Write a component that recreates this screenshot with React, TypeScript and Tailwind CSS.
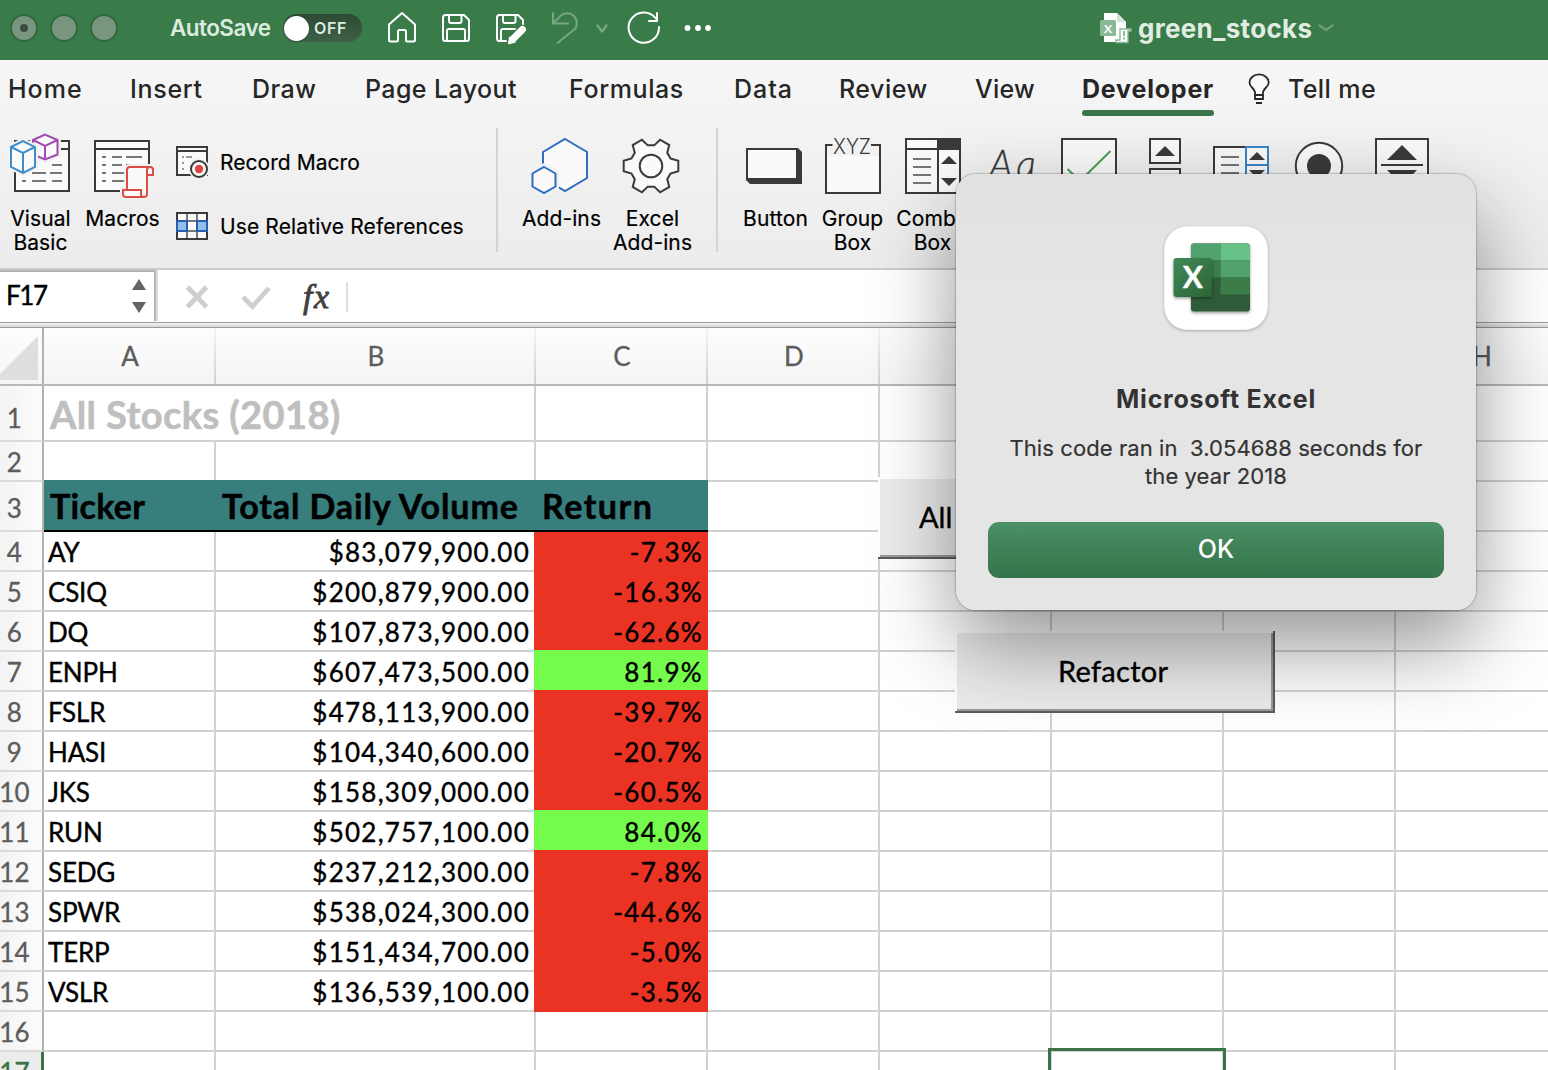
import React from "react";

const INK = "#3b3a39";
const PAPER = "#fafafa";

/* ---------- Title bar ---------- */

function TrafficLight({ dot = false }: { dot?: boolean }) {
  return (
    <span className="flex size-[28px] items-center justify-center rounded-full border-2 border-[#33693c] bg-[#789580]">
      {dot && <span className="size-2 rounded-full bg-[#3a4d3e]" />}
    </span>
  );
}

function QuickAccess() {
  return (
    <svg className="ml-[20px] h-[44px] w-[340px]" viewBox="382 6 340 44" fill="none" stroke="#fff" strokeWidth="2" strokeLinejoin="round" strokeLinecap="round">
      <path d="M402 13 L415 24.5 V40 Q415 41.5 413.500 41.500 H407.500 Q406 41.500 406 40 V31.500 Q406 30 404.500 30 H399.500 Q398 30 398 31.500 V40 Q398 41.500 396.500 41.500 H390.500 Q389 41.500 389 40 V24.500 Z" />
      <path d="M445.500 15 H464 L469 20 V38.500 Q469 41 466.500 41 H445.500 Q443 41 443 38.500 V17.500 Q443 15 445.500 15 Z M449 15 V21 Q449 23 451 23 H459.500 Q461.500 23 461.500 21 V15 M447 41 V31 Q447 29 449 29 H463 Q465 29 465 31 V41" />
      <path d="M506 41 H499.500 Q497 41 497 38.500 V17.500 Q497 15 499.500 15 H518 L523 20 V24 M503 15 V21 Q503 23 505 23 H513.500 Q515.500 23 515.500 21 V15 M501 41 V31 Q501 29 503 29 H515" />
      <path d="M513 39 L522.500 29.500" strokeWidth="7" />
      <path d="M508.500 43.500 L509.500 37 L515 42 Z" fill="#fff" strokeWidth="1" />
      <g stroke="#7ba685">
        <path d="M553 13 V23.500 H568 M553.500 23 L560.500 15.900 A9.700 9.700 0 0 1 574.500 29.300 L557.500 43" />
        <path d="M597.500 25.500 L602 31.500 L606.500 25.500" strokeWidth="2.400" />
      </g>
      <path d="M659 27 A15.200 15.200 0 1 1 656 18.500 M657 13 V21 H649" />
      <g fill="#fff" stroke="none">
        <circle cx="687.500" cy="28" r="2.900" />
        <circle cx="698" cy="28" r="2.900" />
        <circle cx="708" cy="28" r="2.900" />
      </g>
    </svg>
  );
}

function TitleBar() {
  return (
    <header className="flex h-[60px] items-start bg-[#397b49] pl-[10px]">
      <div className="flex gap-[12px] pt-[14px]">
        <TrafficLight dot />
        <TrafficLight />
        <TrafficLight />
      </div>
      <span className="ml-[52px] w-[113px] pt-[12px] text-[22.500px] leading-[32px] font-semibold tracking-[-0.55px] text-[#dcebdf]">AutoSave</span>
      <span className="mt-[14px] flex h-[28px] w-[79px] items-center rounded-full bg-linear-to-b from-[#2c4934] to-[#3f6148] pl-[1px]">
        <span className="size-[25px] rounded-full bg-white shadow" />
        <span className="ml-[5px] text-[16px] leading-none font-semibold tracking-[0.6px] text-[#dcebdf]">OFF</span>
      </span>
      <div className="mt-[6px]">
        <QuickAccess />
      </div>
      <div className="ml-[378px] flex pt-[12px]">
        <svg className="h-[32px] w-[34px]" viewBox="1100 12 34 32">
          <path d="M1104 13 H1117 L1126 22 V42 H1104 Z" fill="#fff" />
          <path d="M1117 13 V22 H1126 Z" fill="#d7e3d9" />
          <rect x="1100" y="20" width="16" height="16" rx="1.500" fill="#8bb896" />
          <text x="1108" y="32.500" textAnchor="middle" fontSize="12" fontWeight="700" fontFamily="Lato" fill="#fff">X</text>
          <path d="M1120 29 H1131 V31 H1128 V42.500 H1116 V40 H1120 Z" fill="#fff" stroke="#8bb896" strokeWidth="1.400" />
          <path d="M1124 31 V36 M1124 37.500 V39.500" stroke="#8bb896" strokeWidth="2" />
        </svg>
        <span className="ml-[4px] pt-px text-[26px] leading-[32px] font-bold tracking-[0.3px] text-[#e1ece3]">green_stocks</span>
        <svg className="mt-[10px] ml-[5px] h-[12px] w-[18px]" viewBox="0 0 18 12" fill="none" stroke="#6b9c77" strokeWidth="2.600" strokeLinecap="round" strokeLinejoin="round">
          <path d="M2.500 3.500 L9 8 L15.500 3.500" />
        </svg>
      </div>
    </header>
  );
}

/* ---------- Ribbon ---------- */

function Tabs() {
  const tab = "text-[25px] leading-[32px] font-medium text-[#262626]";
  return (
    <nav className="flex h-[60px] items-start pt-[13px] pl-[8px] whitespace-nowrap">
      <span className={`${tab} w-[122px] tracking-[1px]`}>Home</span>
      <span className={`${tab} w-[122px] tracking-[0.7px]`}>Insert</span>
      <span className={`${tab} w-[113px] tracking-[0.5px]`}>Draw</span>
      <span className={`${tab} w-[204px] tracking-[0.4px]`}>Page Layout</span>
      <span className={`${tab} w-[165px] tracking-[0.6px]`}>Formulas</span>
      <span className={`${tab} w-[105px] tracking-[1px]`}>Data</span>
      <span className={`${tab} w-[136px] tracking-[0.5px]`}>Review</span>
      <span className={`${tab} w-[107px] tracking-[0.2px]`}>View</span>
      <span className="flex w-[132px] flex-col">
        <span className="text-[25px] leading-[32px] font-bold tracking-[0.8px] text-[#262626]">Developer</span>
        <span className="mt-[5px] h-[6px] rounded-full bg-[#3b7449]" />
      </span>
      <svg className="-mt-px ml-[33px] h-[34px] w-[24px]" viewBox="1247 72 24 34" fill="none" stroke="#262626" strokeWidth="1.800">
        <path d="M1255 95 V92 Q1254.500 90 1252 87.500 Q1249.500 85 1249.500 82.500 A9.600 8.200 0 0 1 1268.700 82.500 Q1268.700 85 1266 87.500 Q1263.500 90 1263 92 V95 Z" fill={PAPER} />
        <path d="M1255 95 V99 H1263 V95 M1256 103 H1262" />
      </svg>
      <span className={`${tab} ml-[17px] tracking-[0.4px]`}>Tell me</span>
    </nav>
  );
}

function VisualBasicIcon() {
  return (
    <svg className="h-[74px] w-[80px]" viewBox="0 132 80 74" fill="none" strokeWidth="2">
      <rect x="15" y="141" width="54" height="50" fill={PAPER} stroke={INK} />
      <path d="M15 149 H69" stroke={INK} />
      <path d="M52 165 H62 M32 173 H46 M50 173 H62 M22 181 H26 M32 181 H46 M52 181 H62" stroke="#777" />
      <path d="M33 140 L45 134 L58 140 V154.500 L45 160 L33 154.500 Z" fill={PAPER} stroke="#f1f1f1" strokeWidth="6" />
      <path d="M33 140 L45 134.500 L57.500 140 V154.500 L45 159.500 L33 154.500 Z M33 140 L45 146 L57.500 140 M45 146 V159.500" fill={PAPER} stroke="#a04bb0" />
      <path d="M11 147 L23 141 L35 147 V167 L23 173 L11 167 Z" fill={PAPER} stroke="#f1f1f1" strokeWidth="6" />
      <path d="M11 147 L23 141 L35 147 V167 L23 173 L11 167 Z M11 147 L23 153 L35 147 M23 153 V173" fill={PAPER} stroke="#3f8ccb" />
    </svg>
  );
}

function MacrosIcon() {
  return (
    <svg className="h-[74px] w-[84px]" viewBox="80 132 84 74" fill="none" strokeWidth="2">
      <rect x="95" y="141" width="54" height="50" fill={PAPER} stroke={INK} />
      <path d="M95 149 H149" stroke={INK} />
      <path d="M102 157 H106 M112 157 H122 M126 157 H142 M102 165 H106 M112 165 H122 M102 173 H106 M112 173 H124 M102 181 H106 M112 181 H124 M126 165 H142" stroke="#777" />
      <path d="M127 190 V170 Q127 167 130 167 H150 Q153 167 153 170 V175 H147 V194 Q147 197 144 197 H126 Q123 197 123 194 V190 Z" fill="#f1f1f1" stroke="#f1f1f1" strokeWidth="6" />
      <path d="M127 190 V170 Q127 167 130 167 H150 Q153 167 153 170 V175 H147 V194 Q147 197 144 197 H126 Q123 197 123 194 V190 Z" fill={PAPER} stroke="#da4c45" />
      <path d="M147 175 V170 Q147 167 150 167 M127 190 H141 V194 Q141 197 144 197" stroke="#da4c45" />
    </svg>
  );
}

function RecordIcon() {
  return (
    <svg className="h-[34px] w-[34px]" viewBox="175 145 34 34" fill="none" strokeWidth="2">
      <rect x="177" y="147" width="30" height="28" fill={PAPER} stroke={INK} />
      <path d="M177 151 H207" stroke={INK} />
      <path d="M182 157 H184 M186 157 H192 M182 163 H184 M182 169 H184" stroke="#777" strokeWidth="1.600" />
      <circle cx="199" cy="169" r="10.500" fill="#f1f1f1" />
      <circle cx="199" cy="169" r="8" fill={PAPER} stroke={INK} />
      <circle cx="199" cy="169" r="4.200" fill="#dc4640" />
    </svg>
  );
}

function RelativeIcon() {
  return (
    <svg className="h-[32px] w-[34px]" viewBox="175 210 34 32" fill="none" strokeWidth="2">
      <rect x="177" y="213" width="30" height="26" fill={PAPER} stroke={INK} />
      <path d="M187 214 V238 M197 214 V238" stroke="#777" />
      <path d="M187 221 H197 M187 231 H197" stroke="#777" />
      <path d="M177 221 H187 V231 H177 Z M197 221 H207 V231 H197 Z" fill="#94bfe9" stroke="#2560b0" />
    </svg>
  );
}

function AddInsIcon() {
  return (
    <svg className="h-[74px] w-[80px]" viewBox="522 132 80 74" strokeWidth="2">
      <path d="M566 139 L588 152 V178 L566 191 L544 178 V152 Z" fill={PAPER} stroke="#2f6dbd" />
      <path d="M545 167 L556.500 173.500 V186.500 L545 193 L533.500 186.500 V173.500 Z" fill="#f1f1f1" stroke="#f1f1f1" strokeWidth="7" />
      <path d="M545 167 L556.500 173.500 V186.500 L545 193 L533.500 186.500 V173.500 Z" fill={PAPER} stroke="#2f6dbd" />
    </svg>
  );
}

const gearPoints = [0, 60, 120, 180, 240, 300]
  .flatMap((deg) => {
    const a = (deg * Math.PI) / 180;
    return [
      [19.5, -7.5],
      [27.3, -5.3],
      [27.3, 5.3],
      [19.5, 7.5],
    ].map(([x, y]) => `${(x * Math.cos(a) - y * Math.sin(a)).toFixed(2)},${(x * Math.sin(a) + y * Math.cos(a)).toFixed(2)}`);
  })
  .join(" ");

function GearIcon() {
  return (
    <svg className="h-[74px] w-[80px]" viewBox="-40 -34 80 74" fill={PAPER} stroke={INK} strokeWidth="2">
      <g transform="translate(-1 0)">
        <polygon points={gearPoints} />
        <circle r="11.300" />
      </g>
    </svg>
  );
}

function ButtonIcon() {
  return (
    <svg className="h-[74px] w-[80px]" viewBox="735 132 80 74">
      <path d="M746 148 H798 L802 152 V184 H750 L746 180 Z" fill={INK} />
      <rect x="748" y="150" width="48" height="28" fill={PAPER} />
    </svg>
  );
}

function GroupBoxIcon() {
  return (
    <svg className="h-[74px] w-[80px]" viewBox="812 132 80 74">
      <rect x="827" y="156" width="53" height="37" fill={PAPER} />
      <path d="M832.500 145 H826 V193 H880 V145 H871" fill="none" stroke={INK} strokeWidth="2" />
      <text x="852" y="154" textAnchor="middle" fontSize="21.500" fontWeight="300" fontFamily="Inter" textLength="38" lengthAdjust="spacingAndGlyphs" fill={INK}>XYZ</text>
    </svg>
  );
}

function ComboIcon() {
  return (
    <svg className="h-[74px] w-[80px]" viewBox="892 132 80 74">
      <rect x="906" y="139" width="54" height="54" fill={PAPER} stroke={INK} strokeWidth="2" />
      <rect x="937" y="138" width="24" height="12" fill={INK} />
      <path d="M906 149 H960 M938 149 V193" stroke={INK} strokeWidth="2" />
      <path d="M913 159 H931 M913 167 H931 M913 175 H931 M913 183 H931" stroke="#777" strokeWidth="2" />
      <path d="M941 164 L949 156 L957 164 Z M941 178 L949 186 L957 178 Z" fill={INK} />
    </svg>
  );
}

function FormControls() {
  return (
    <svg className="h-[74px] w-[470px]" viewBox="976 132 470 74" fill="none" stroke={INK} strokeWidth="2">
      <text x="989" y="178" fontSize="39" fontWeight="300" fontStyle="italic" fontFamily="Lato" fill={INK} strokeWidth="0.300" letterSpacing="4">Aa</text>
      <rect x="1062" y="139" width="54" height="54" fill={PAPER} />
      <path d="M1067.500 169 L1080 181 L1110.500 151" stroke="#4d9e53" />
      <rect x="1150" y="139" width="30" height="24" fill={PAPER} />
      <rect x="1150" y="169" width="30" height="24" fill={PAPER} />
      <rect x="1214" y="147" width="54" height="38" fill={PAPER} />
      <path d="M1221 157 H1239 M1221 165 H1239 M1221 173 H1239" stroke="#777" />
      <path d="M1246 147 H1268 V185 H1246 Z M1246 165 H1268" stroke="#3a84c6" />
      <circle cx="1319" cy="166" r="23.200" fill={PAPER} />
      <circle cx="1319" cy="166" r="12" fill={INK} stroke="none" />
      <rect x="1376" y="139" width="52" height="54" fill={PAPER} />
      <path d="M1381 165 H1423" />
      <g fill={INK} stroke="none">
        <path d="M1155 156 L1165 146 L1175 156 Z" />
        <path d="M1249 160 L1257 152 L1265 160 Z M1249 170 L1257 178 L1265 170 Z" />
        <path d="M1387 160 L1402 145 L1417 160 Z M1387 170 L1402 185 L1417 170 Z" />
      </g>
    </svg>
  );
}

function Tool({ icon, lines, className }: { icon: React.ReactNode; lines: string[]; className: string }) {
  return (
    <div className={`flex shrink-0 flex-col items-center ${className}`}>
      {icon}
      <div className="flex flex-col items-center pt-px pl-px">
        {lines.map((line) => (
          <span key={line} className="text-[21px] leading-[24px] tracking-[0.1px] whitespace-nowrap text-black [-webkit-text-stroke:0.2px_black]">
            {line}
          </span>
        ))}
      </div>
    </div>
  );
}

function Ribbon() {
  return (
    <section className="h-[210px] border-b-2 border-[#cbcbcb] bg-linear-to-b from-[#f6f6f6] to-[#ececec]">
      <Tabs />
      <div className="flex items-start pt-[12px]">
        <Tool className="w-[80px]" icon={<VisualBasicIcon />} lines={["Visual", "Basic"]} />
        <Tool className="w-[84px]" icon={<MacrosIcon />} lines={["Macros"]} />
        <div className="flex w-[332px] flex-col pt-[13px] pl-[11px]">
          <div className="flex h-[34px] items-center gap-[11px] text-[21px] tracking-[0.05px] text-black [-webkit-text-stroke:0.2px_black]">
            <RecordIcon />
            <span className="pt-[2px]">Record Macro</span>
          </div>
          <div className="mt-[31px] flex h-[32px] items-center gap-[11px] text-[21px] tracking-[0.12px] text-black [-webkit-text-stroke:0.2px_black]">
            <RelativeIcon />
            <span className="pt-[2px] whitespace-nowrap">Use Relative References</span>
          </div>
        </div>
        <div className="-mt-[4px] h-[124px] w-[2px] bg-[#d3d3d3]" />
        <Tool className="ml-[23px] w-[80px]" icon={<AddInsIcon />} lines={["Add-ins"]} />
        <Tool className="ml-[11px] w-[80px]" icon={<GearIcon />} lines={["Excel", "Add-ins"]} />
        <div className="-mt-[4px] ml-[24px] h-[124px] w-[2px] bg-[#d3d3d3]" />
        <Tool className="ml-[17px] w-[80px]" icon={<ButtonIcon />} lines={["Button"]} />
        <Tool className="-ml-[3px] w-[80px]" icon={<GroupBoxIcon />} lines={["Group", "Box"]} />
        <Tool className="w-[80px]" icon={<ComboIcon />} lines={["Combo", "Box"]} />
        <div className="ml-[4px]">
          <FormControls />
        </div>
      </div>
    </section>
  );
}

/* ---------- Formula bar ---------- */

function FormulaBar() {
  return (
    <section className="flex h-[58px] flex-col bg-white">
      <div className="flex h-[52px] items-start">
        <div className="flex h-[51px] w-[156px] justify-between border-t-2 border-r-2 border-[#b4b4b4] pr-[8px] pl-[6px] shadow-[2px_0_0_#dcdcdc]">
          <span className="pt-[7px] font-['Lato'] text-[26px] leading-[32px] tracking-[-1.4px] text-black [-webkit-text-stroke:0.4px_black]">F17</span>
          <svg className="mt-[5px] h-[40px] w-[14px]" viewBox="132 277 14 40" fill="#636363">
            <path d="M132 290 L139 279 L146 290 Z M132 302 L139 313 L146 302 Z" />
          </svg>
        </div>
        <svg className="ml-[26px] h-[50px] w-[100px]" viewBox="182 270 100 50" fill="none" stroke="#cfcfcf" strokeWidth="4.800">
          <path d="M187.500 287 L206.500 307 M206.500 287 L187.500 307" />
          <path d="M243 297 L252.500 306.500 L269 288" />
        </svg>
        <span className="ml-[21px] font-['Liberation_Serif'] text-[34px] leading-[54px] font-medium tracking-[1.6px] text-[#404040] italic [-webkit-text-stroke:0.8px_#404040]">fx</span>
        <div className="mt-[12px] ml-[15px] h-[30px] w-[2px] bg-[#dedede]" />
      </div>
      <div className="h-[6px] border-t border-b border-[#9a9a9a] bg-linear-to-b from-[#f4f4f4] to-[#d6d6d6]" />
    </section>
  );
}

/* ---------- Sheet ---------- */

const stocks: [string, string, string][] = [
  ["AY", "$83,079,900.00", "-7.3%"],
  ["CSIQ", "$200,879,900.00", "-16.3%"],
  ["DQ", "$107,873,900.00", "-62.6%"],
  ["ENPH", "$607,473,500.00", "81.9%"],
  ["FSLR", "$478,113,900.00", "-39.7%"],
  ["HASI", "$104,340,600.00", "-20.7%"],
  ["JKS", "$158,309,000.00", "-60.5%"],
  ["RUN", "$502,757,100.00", "84.0%"],
  ["SEDG", "$237,212,300.00", "-7.8%"],
  ["SPWR", "$538,024,300.00", "-44.6%"],
  ["TERP", "$151,434,700.00", "-5.0%"],
  ["VSLR", "$136,539,100.00", "-3.5%"],
];

const grid = "shrink-0 border-r-2 border-b-2 border-[#d2d2d2]";

function RowHeader({ n, className = "" }: { n: number; className?: string }) {
  return (
    <div className={`w-[44px] shrink-0 border-r-2 border-b-2 border-r-[#b2b2b2] border-b-[#dadada] bg-linear-to-r from-[#f3f3f3] to-[#fcfcfc] ${className}`}>
      <div className="flex w-[29px] justify-center leading-[38px] tracking-[0.3px] text-[#5c5c5c] [-webkit-text-stroke:0.3px_#5c5c5c]">{n}</div>
    </div>
  );
}

function EmptyCells({ count }: { count: number }) {
  return (
    <>
      {Array.from({ length: count }, (_, i) => (
        <div key={i} className={`${grid} w-[172px]`} />
      ))}
    </>
  );
}

function ColumnHeaders() {
  const letter = "flex shrink-0 items-center justify-center border-r-2 pl-[2px] [border-image:linear-gradient(to_bottom,#f6f6f6,#d0d0d0)_1]";
  return (
    <div className="flex h-[58px] border-b-2 border-[#b8b8b8] bg-linear-to-b from-[#fdfdfd] to-[#f5f5f5] text-[#5c5c5c] [-webkit-text-stroke:0.3px_#5c5c5c]">
      <div className="flex w-[44px] shrink-0 items-end border-r-2 border-[#b2b2b2]">
        <svg className="mb-[4px] h-[44px] w-[38px]" viewBox="0 0 38 44">
          <path d="M38 0 V44 H0 V38 Z" fill="#dedede" />
        </svg>
      </div>
      <div className={`${letter} w-[172px]`}>A</div>
      <div className={`${letter} w-[320px]`}>B</div>
      {["C", "D", "E", "F", "G", "H"].map((c) => (
        <div key={c} className={`${letter} w-[172px]`}>
          {c}
        </div>
      ))}
    </div>
  );
}

function SheetButton({ children, className }: { children: React.ReactNode; className: string }) {
  return (
    <div className={`absolute h-[82px] w-[320px] border-r-2 border-b-2 border-[#5c5c5c] bg-white font-['Lato'] ${className}`}>
      <div className="h-full border-t-2 border-l-2 border-white">
        <div className="h-full border-r-2 border-b-2 border-[#9b9b9b] bg-[#ececec] text-[29px] leading-[76px] text-black [-webkit-text-stroke:0.4px_black]">
          {children}
        </div>
      </div>
    </div>
  );
}

function Sheet() {
  return (
    <section className="bg-white font-['Lato'] text-[26px] leading-[38px]">
      <ColumnHeaders />
      <div className="flex h-[56px]">
        <RowHeader n={1} className="pt-[13px]" />
        <div className={`${grid} w-[492px] pt-px pl-[6px] text-[38px] leading-[54px] font-bold tracking-[0.4px] text-[#bfbfbf] [-webkit-text-stroke:0.6px_#bfbfbf]`}>
          All Stocks (2018)
        </div>
        <EmptyCells count={6} />
      </div>
      <div className="flex h-[40px]">
        <RowHeader n={2} className="pt-px" />
        <div className={`${grid} w-[172px]`} />
        <div className={`${grid} w-[320px]`} />
        <EmptyCells count={6} />
      </div>
      <div className="flex h-[50px]">
        <RowHeader n={3} className="pt-[7px]" />
        <div className="-mt-[2px] flex h-[52px] shrink-0 border-b-2 border-black bg-[#377e7d] pt-px text-[34px] leading-[50px] font-bold text-black [-webkit-text-stroke:0.5px_black]">
          <span className="w-[172px] pl-[6px] tracking-[0.3px]">Ticker</span>
          <span className="w-[320px] pl-[6px] tracking-[0.9px]">Total Daily Volume</span>
          <span className="w-[172px] pl-[6px] tracking-[1.5px]">Return</span>
        </div>
        <EmptyCells count={5} />
      </div>
      {stocks.map(([ticker, volume, change], i) => (
        <div key={ticker} className="flex h-[40px] text-black [-webkit-text-stroke:0.4px_black]">
          <RowHeader n={i + 4} className="pt-px" />
          <div className={`${grid} w-[172px] pt-px pl-[4px] tracking-[-0.2px]`}>{ticker}</div>
          <div className={`${grid} w-[320px] pt-px pr-[4px] text-right tracking-[1.25px]`}>{volume}</div>
          <div
            className={`-ml-[2px] w-[174px] shrink-0 pr-[5px] text-right tracking-[1.3px] ${i === 0 ? "h-[40px] pt-px" : "-mt-[2px] h-[42px] pt-[3px]"} ${change.startsWith("-") ? "bg-[#ea3323]" : "bg-[#75fb4c]"}`}
          >
            {change}
          </div>
          <EmptyCells count={5} />
        </div>
      ))}
      <div className="flex h-[40px]">
        <RowHeader n={16} className="pt-px" />
        <div className={`${grid} w-[172px]`} />
        <div className={`${grid} w-[320px]`} />
        <EmptyCells count={6} />
      </div>
      <div className="flex h-[40px]">
        <div className="w-[44px] shrink-0 border-r-3 border-[#3a7446] bg-[#ececec] pt-px">
          <div className="flex w-[29px] justify-center tracking-[0.3px] text-[#3a7446] [-webkit-text-stroke:0.4px_#3a7446]">17</div>
        </div>
        <div className={`${grid} w-[172px]`} />
        <div className={`${grid} w-[320px]`} />
        <EmptyCells count={6} />
      </div>
    </section>
  );
}

/* ---------- Alert dialog ---------- */

function ExcelAppIcon() {
  return (
    <svg className="size-[104px]" viewBox="0 0 104 104">
      <defs>
        <linearGradient id="tile" x1="0" y1="0" x2="1" y2="1">
          <stop offset="0" stopColor="#43895a" />
          <stop offset="1" stopColor="#2b6434" />
        </linearGradient>
        <clipPath id="book">
          <rect x="27" y="17.500" width="59" height="68" rx="3" />
        </clipPath>
        <filter id="soft" x="-20%" y="-20%" width="150%" height="150%">
          <feDropShadow dx="0" dy="1.500" stdDeviation="1.800" floodOpacity="0.400" />
        </filter>
      </defs>
      <rect x="0.500" y="0.500" width="103" height="103" rx="23" fill="#fff" />
      <g filter="url(#soft)">
        <g clipPath="url(#book)">
          <rect x="27" y="17" width="59" height="69" fill="#2e5b38" />
          <rect x="27" y="17" width="29.500" height="17.500" fill="#51a26c" />
          <rect x="56.500" y="17" width="30" height="17.500" fill="#66c286" />
          <rect x="27" y="34.500" width="29.500" height="17" fill="#3a7b4a" />
          <rect x="56.500" y="34.500" width="30" height="17" fill="#51a26c" />
          <rect x="56.500" y="51.500" width="30" height="17" fill="#3a7b4a" />
        </g>
      </g>
      <rect x="9.500" y="32" width="38.500" height="39" rx="3" fill="url(#tile)" filter="url(#soft)" />
      <text x="28.800" y="62" textAnchor="middle" fontFamily="Lato" fontWeight="700" fontSize="30" fill="#fff" stroke="#fff" strokeWidth="0.400">X</text>
    </svg>
  );
}

function Dialog() {
  return (
    <div className="absolute top-[174px] left-[956px] flex h-[436px] w-[520px] flex-col items-center rounded-[20px] bg-linear-to-b from-[#e1e1e1] to-[#e5e5e5] to-25% px-[32px] pt-[52px] shadow-[0_0_2px_rgba(0,0,0,0.6),0_36px_84px_rgba(0,0,0,0.42)]">
      <div className="rounded-[23px] shadow-[0_1px_3px_rgba(0,0,0,0.25)]">
        <ExcelAppIcon />
      </div>
      <h1 className="mt-[53px] text-[25px] leading-[32px] font-bold tracking-[0.75px] text-[#333]">Microsoft Excel</h1>
      <p className="mt-[19px] text-center text-[22px] leading-[28px] tracking-[0.08px] whitespace-pre text-[#333] [-webkit-text-stroke:0.2px_#333]">
        {"This code ran in  3.054688 seconds for\nthe year 2018"}
      </p>
      <button className="mt-[32px] h-[56px] w-full rounded-[11px] bg-linear-to-b from-[#4d9167] via-[#3f8156] to-[#34744a] text-[25px] font-medium text-white">OK</button>
    </div>
  );
}

export default function App() {
  return (
    <main className="relative h-[1070px] w-[1548px] overflow-hidden bg-white font-['Inter',sans-serif]">
      <TitleBar />
      <Ribbon />
      <FormulaBar />
      <Sheet />
      <SheetButton className="top-[477px] left-[878px]">
        <span className="ml-[39px]">All</span>
      </SheetButton>
      <SheetButton className="top-[631px] left-[955px]">
        <span className="block pl-[101px] tracking-[0.3px]">Refactor</span>
      </SheetButton>
      <div className="absolute top-[1048px] left-[1048px] h-[46px] w-[178px] border-3 border-[#3a7446]" />
      <Dialog />
    </main>
  );
}
